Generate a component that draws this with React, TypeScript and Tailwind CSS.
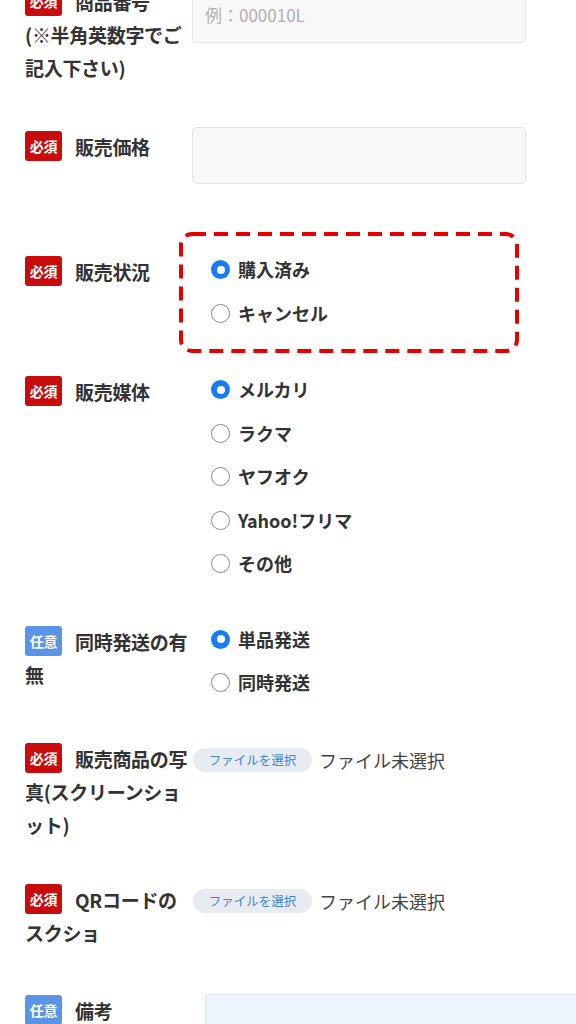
import React from "react";

const FONT = { fontFamily: '"Noto Sans CJK JP", "Noto Sans", sans-serif' };

function Badge({ kind }: { kind: "req" | "opt" }) {
  return (
    <span
      className={
        "inline-flex h-[30px] w-[37px] items-center justify-center rounded-[3px] align-top text-[14px] font-bold leading-none text-white mr-[13px] mt-[1px] " +
        (kind === "req" ? "bg-[#c80c0c]" : "bg-[#5b93e6]")
      }
    >
      {kind === "req" ? "必須" : "任意"}
    </span>
  );
}

function Label({ kind, children }: { kind: "req" | "opt"; children: React.ReactNode }) {
  return (
    <div className="w-[168px] shrink-0 text-[19px] font-bold leading-[33px] tracking-[-0.3px] text-[#333]">
      <Badge kind={kind} />
      {children}
    </div>
  );
}

function Radio({ label, checked }: { label: string; checked?: boolean }) {
  return (
    <div className="flex h-[43.5px] items-center">
      {checked ? (
        <span className="flex h-[19px] w-[19px] items-center justify-center rounded-full bg-[#1a7cf2]">
          <span className="h-[8px] w-[8px] rounded-full bg-white" />
        </span>
      ) : (
        <span className="h-[19px] w-[19px] rounded-full border-[1.5px] border-[#8c8c8c] bg-white" />
      )}
      <span className="ml-[8px] text-[18px] font-bold text-[#333]">{label}</span>
    </div>
  );
}

function FileInput() {
  return (
    <div className="flex items-center self-start pt-[5px]">
      <span className="flex h-[24px] w-[119px] items-center justify-center rounded-full bg-[#e8ebef] text-[12.5px] text-[#3b86e0]">
        ファイルを選択
      </span>
      <span className="ml-[7px] text-[18px] text-[#444]">ファイル未選択</span>
    </div>
  );
}

function DashedBox() {
  return (
    <svg
      className="pointer-events-none absolute left-[154px] top-[-16px]"
      width="340"
      height="121"
      viewBox="0 0 340 121"
    >
      <rect
        x="2"
        y="2"
        width="336"
        height="117"
        rx="11"
        ry="11"
        fill="none"
        stroke="#e60000"
        strokeWidth="4"
        strokeDasharray="14 8"
      />
    </svg>
  );
}

export default function App() {
  return (
    <div className="min-h-[1024px] overflow-hidden bg-white pl-[25px]" style={FONT}>
      {/* 商品番号 */}
      <div className="mt-[-15px] flex items-start">
        <Label kind="req">
          商品番号
          <br />
          (※半角英数字でご記入下さい)
        </Label>
        <div className="ml-[-1px] mt-[-15px] flex h-[73px] w-[334px] items-end rounded-[5px] border border-[#e3e3e3] bg-[#f8f8f8] pb-[15px] pl-[12px] text-[17px] text-[#b0b0b0]">
          例：000010L
        </div>
      </div>

      {/* 販売価格 */}
      <div className="mt-[43px] flex items-start">
        <div className="pt-[3px]">
          <Label kind="req">販売価格</Label>
        </div>
        <div className="ml-[-1px] h-[57px] w-[334px] rounded-[5px] border border-[#e3e3e3] bg-[#f8f8f8]" />
      </div>

      {/* 販売状況 */}
      <div className="relative mt-[64px] flex items-start">
        <div className="pt-[7px]">
          <Label kind="req">販売状況</Label>
        </div>
        <div className="ml-[18px]">
          <Radio label="購入済み" checked />
          <Radio label="キャンセル" />
        </div>
        <DashedBox />
      </div>

      {/* 販売媒体 */}
      <div className="mt-[33px] flex items-start">
        <div className="pt-[7px]">
          <Label kind="req">販売媒体</Label>
        </div>
        <div className="ml-[18px]">
          <Radio label="メルカリ" checked />
          <Radio label="ラクマ" />
          <Radio label="ヤフオク" />
          <Radio label="Yahoo!フリマ" />
          <Radio label="その他" />
        </div>
      </div>

      {/* 同時発送の有無 */}
      <div className="mt-[32px] flex items-start">
        <div className="pt-[7px]">
          <Label kind="opt">同時発送の有無</Label>
        </div>
        <div className="ml-[18px]">
          <Radio label="単品発送" checked />
          <Radio label="同時発送" />
        </div>
      </div>

      {/* 販売商品の写真 */}
      <div className="mt-[37px] flex items-start">
        <Label kind="req">販売商品の写真(スクリーンショット)</Label>
        <FileInput />
      </div>

      {/* QRコード */}
      <div className="mt-[42px] flex items-start">
        <Label kind="req">QRコードのスクショ</Label>
        <FileInput />
      </div>

      {/* 備考 */}
      <div className="mt-[45px] flex items-start">
        <Label kind="opt">備考</Label>
        <div className="ml-[12px] h-[120px] flex-1 rounded-l-[5px] border border-r-0 border-[#d6e3f1] bg-[#eef5fe]" />
      </div>
    </div>
  );
}
